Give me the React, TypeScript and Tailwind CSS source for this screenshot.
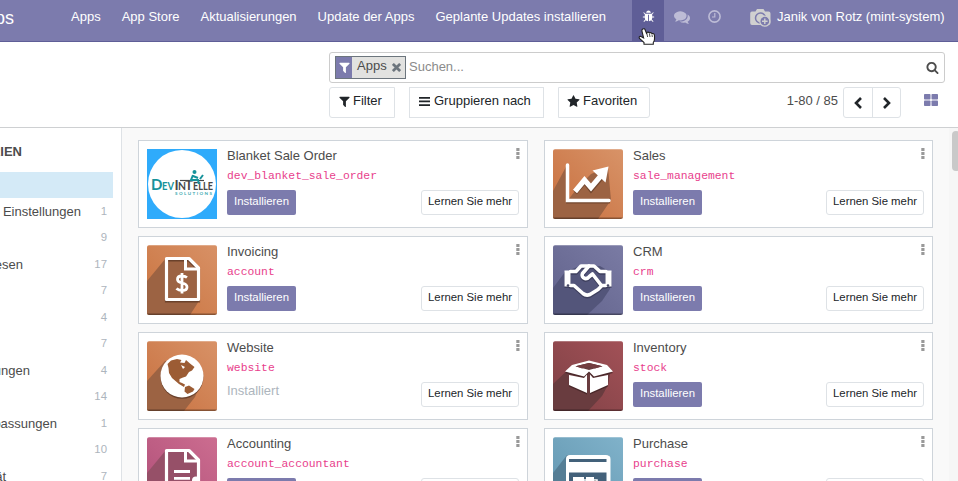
import type { ReactNode } from 'react';

const P = {
  filter: 'M1595 295q17 41-14 70l-493 493v742q0 42-39 59-13 5-25 5-27 0-45-19l-256-256q-19-19-19-45v-486l-493-493q-31-29-14-70 17-39 59-39h1280q42 0 59 39z',
  comments:
    'M1408 768q0 139-94 257t-256.5 186.5-353.5 68.5q-86 0-176-16-124 88-278 128-36 9-86 16h-3q-11 0-20.5-8t-11.5-21q-1-3-1-6.5t.5-6.5 2-6l2.5-5 3.5-5.5 4-5 4.5-5 4-4.5q5-6 23-25t26-29.5 22.5-29 25-38.5 20.5-44q-124-72-195-177t-71-224q0-139 94-257t256.5-186.5 353.5-68.5 353.5 68.5 256.5 186.5 94 257zm384 256q0 120-71 224.5t-195 176.5q10 24 20.5 44t25 38.5 22.5 29 26 29.5 23 25q1 1 4 4.5t4.5 5 4 5 3.5 5.5l2.5 5 2 6 .5 6.5-1 6.5q-3 14-13 22t-22 7q-50-7-86-16-154-40-278-128-90 16-176 16-271 0-472-132 58 4 88 4 161 0 309-45t264-129q125-92 192-212t67-254q0-77-23-152 129 71 204 178t75 230z',
  search:
    'M1216 832q0-185-131.5-316.5t-316.5-131.5-316.5 131.5-131.5 316.5 131.5 316.5 316.5 131.5 316.5-131.5 131.5-316.5zm512 832q0 52-38 90t-90 38q-54 0-90-38l-343-342q-179 124-399 124-143 0-273.5-55.5t-225-150-150-225-55.5-273.5 55.5-273.5 150-225 225-150 273.5-55.5 273.5 55.5 225 150 150 225 55.5 273.5q0 220-124 399l343 343q37 37 37 90z',
  bug: 'M1696 960q0 26-19 45t-45 19h-224q0 171-67 290l208 209q19 19 19 45t-19 45q-18 19-45 19t-45-19l-198-197q-5 5-15 13t-42 28.5-65 36.5-82 29-97 13v-896h-128v896q-51 0-101.5-13.5t-87-33-66-39-43.5-32.5l-15-14-183 207q-20 21-48 21-24 0-43-16-19-18-20.5-44.5t15.5-46.5l202-227q-58-114-58-274h-224q-26 0-45-19t-19-45 19-45 45-19h224v-294l-173-173q-19-19-19-45t19-45 45-19 45 19l173 173h844l173-173q19-19 45-19t45 19 19 45-19 45l-173 173v294h224q26 0 45 19t19 45zm-480-576h-640q0-133 93.5-226.5t226.5-93.5 226.5 93.5 93.5 226.5z',
  star: 'M1728 647q0 22-26 48l-363 354 86 500q1 7 1 20 0 21-10.500 35.500t-30.500 14.500q-19 0-40-12l-449-236-449 236q-22 12-40 12-21 0-31.500-14.500t-10.500-35.500q0-6 2-20l86-500-364-354q-25-27-25-48 0-37 56-46l502-73 225-455q19-41 49-41t49 41l225 455 502 73q56 9 56 46z',
};

function Glyph({ d, className }: { d: string; className: string }) {
  return (
    <svg viewBox="0 0 1792 1792" className={className} fill="currentColor">
      <path d={d} />
    </svg>
  );
}

function Tile({ id, from, to, shade, shadow, children }: { id: string; from: string; to: string; shade: string; shadow: string; children: ReactNode }) {
  return (
    <svg viewBox="0 0 70 70" className="size-[70px] shrink-0">
      <defs>
        <linearGradient id={id} x1="0" y1="1" x2="1" y2="0">
          <stop offset="0" stopColor={from} />
          <stop offset="1" stopColor={to} />
        </linearGradient>
        <clipPath id={id + 'c'}>
          <rect width="70" height="70" rx="2.500" />
        </clipPath>
      </defs>
      <g clipPath={`url(#${id}c)`}>
        <rect width="70" height="70" fill={`url(#${id})`} />
        <path d={shadow} fill={shade} />
        <path d="M0 .5H70" stroke="#fff" strokeOpacity=".25" />
        <path d="M0 69.300H70" stroke="#000" strokeOpacity=".35" strokeWidth="1.500" />
        {children}
      </g>
    </svg>
  );
}

const docOutline = 'M19.500 13.500H42L51.500 23V54.500H19.500Z';

const tiles: Record<string, ReactNode> = {
  blanket: (
    <svg viewBox="0 0 70 70" className="size-[70px] shrink-0" fontFamily="Lato, 'Liberation Sans', sans-serif">
      <rect width="70" height="70" fill="#2fabfb" />
      <circle cx="35" cy="35" r="34" fill="#fff" />
      <g fontWeight="700">
        <text x="4" y="41" fontSize="15" fill="#17939b">D</text>
        <text x="15" y="41" fontSize="11.500" textLength="12" lengthAdjust="spacingAndGlyphs" fill="#17939b">EV</text>
        <text x="27.500" y="41" fontSize="14" fill="#474747">I</text>
        <text x="31" y="41" fontSize="11.500" textLength="8" lengthAdjust="spacingAndGlyphs" fill="#474747">N</text>
        <text x="38" y="41" fontSize="13" fill="#474747">T</text>
        <text x="46" y="41" fontSize="11.500" textLength="20" lengthAdjust="spacingAndGlyphs" fill="#474747">ELLE</text>
        <text x="28" y="45.500" fontSize="4.500" textLength="37" fill="#39a9b0">SOLUTIONS</text>
      </g>
      <path d="M33 31.500H57" stroke="#474747" strokeWidth="1.200" />
      <circle cx="47.500" cy="23" r="2" fill="#17939b" />
      <path d="M46 26L44 31H51L52 35M46 27L51 29M53 30L56 26" fill="none" stroke="#17939b" strokeWidth="2" />
    </svg>
  ),
  sales: (
    <Tile id="sales" from="#c86f3e" to="#d89368" shade="#9c6343" shadow="M0 42L14 16L15 51L22 42L31 32L38 25L55 18L58 51L45 70H0Z">
      <g transform="translate(0 1.500)" opacity=".5" fill="none" stroke="#4a2c1c" strokeWidth="3">
        <path d="M14.500 16V51.500H57" />
        <path d="M22 42L31.500 31L38 39L50 25" strokeWidth="5" />
      </g>
      <path d="M14.500 16V51.500H56" fill="none" stroke="#fff" strokeWidth="3.500" strokeLinecap="round" />
      <path d="M22 42.500L31.500 31L38 38.500L49 25.500" fill="none" stroke="#fff" strokeWidth="5.200" />
      <path d="M39.500 21.500L55.500 17.500L52.500 33.500Z" fill="#fff" />
    </Tile>
  ),
  invoice: (
    <Tile id="inv" from="#c9733f" to="#d89166" shade="#9c6343" shadow="M0 36L19 13H42L52 23V56L43 70H0Z">
      <path d={docOutline} transform="translate(0 1.500)" fill="none" stroke="#4a2c1c" strokeOpacity=".6" strokeWidth="3.200" />
      <path d={docOutline} fill="none" stroke="#fff" strokeWidth="3.200" strokeLinejoin="round" />
      <path d="M38.500 13.500V24H51.500" fill="none" stroke="#fff" strokeWidth="3" />
      <path d="M40 32.500Q38 31 34.500 31Q30.500 31 30.500 34.300Q30.500 37 35 38Q40 39 40 42Q40 45.500 35.500 45.500Q31.500 45.500 29.500 43.500M35 28V48.500" fill="none" stroke="#fff" strokeWidth="2.800" />
    </Tile>
  ),
  crm: (
    <Tile id="crm" from="#61628b" to="#7a7ba4" shade="#53557a" shadow="M0 43L12 27L29 20L47 21L57 27V44L49 56L34 70H0Z">
      {[0, 1].map((i) => (
        <g key={i} transform={i ? undefined : 'translate(0 1.500)'} fill="none" stroke={i ? '#fff' : '#30314b'} strokeOpacity={i ? 1 : 0.6} strokeWidth="3.600" strokeLinejoin="round" strokeLinecap="round">
          <path d="M17.500 26.500H23L28 21H41L47 26.500H53M17.500 40.500H21L30 48.500Q33 51 37 49.500L45 44.500L49 40.500H53" />
          <path d="M36 21L29.500 28.500Q28 32 32 33.500Q34.500 34 37 31L39.500 29L48 40" />
          <path d="M14.500 25.500V41.500M55.500 25.500V41.500" strokeWidth="6" strokeLinecap="butt" />
        </g>
      ))}
      <circle cx="15" cy="40.500" r="1.300" fill="#474966" />
      <circle cx="55" cy="40.500" r="1.300" fill="#474966" />
    </Tile>
  ),
  website: (
    <Tile id="web" from="#c87140" to="#d89267" shade="#9c6343" shadow="M0 40L18 20L50 19L56 37L48 56L37 70H0Z">
      <circle cx="35" cy="36.300" r="21.500" fill="#4a2c1c" fillOpacity=".6" />
      <circle cx="35" cy="35" r="21.500" fill="#fff" />
      <path d="M20.500 23L24 19.500L30 18L34.500 19L33 21.500L37.500 22L39 19L43 22.500L47.500 26L45 29.500L42 31L39 35.500L36 36.500L32.500 38L32.500 41L35 42L38 43.500L37 46L32 43L25 37L22 32L21.500 27Z" fill="#9c5c34" />
      <path d="M38 46L42 44.500L47.500 48L46 50.500L40.500 53L37.500 50.500Z" fill="#9c5c34" />
      <path d="M34 24L38 26L36 28Z" fill="#fff" />
    </Tile>
  ),
  inventory: (
    <Tile id="stock" from="#7f4145" to="#a25157" shade="#693c3f" shadow="M0 43L18 26L36 20L58 28L55 44L49 55L35 70H0Z">
      {[0, 1].map((i) => (
        <g key={i} transform={i ? undefined : 'translate(0 1.500)'} fill={i ? '#fff' : '#351b1d'} fillOpacity={i ? 1 : 0.6}>
          <path d="M16 34L31 37L34 33.500V52L16 44ZM37 33.500L40 37L55 34V44L37 52Z" />
          <path fillRule="evenodd" d="M19 24L36 19.500L54 24L60 30.500L41 35.500L36 30.500L31 35.500L12 30.500ZM22.500 25.200L36 29L49.500 25.200L36 22Z" />
        </g>
      ))}
      <path d="M22.500 25.200L36 22L49.500 25.200L42 27.500L36 25.500L29 27.500Z" fill="#743d40" />
    </Tile>
  ),
  accounting: (
    <Tile id="acc" from="#b04f78" to="#cc6d90" shade="#965068" shadow="M0 36L19 13H42L52 23V70H0Z">
      <path d={docOutline} fill="none" stroke="#fff" strokeWidth="3.200" strokeLinejoin="round" />
      <path d="M38.500 13.500V24H51.500" fill="none" stroke="#fff" strokeWidth="3" />
      <path d="M27 34.500H43M27 41.300H43" stroke="#fff" strokeWidth="2.800" />
      <circle cx="49" cy="43.500" r="4" fill="#fff" />
    </Tile>
  ),
  purchase: (
    <Tile id="pur" from="#6296b0" to="#80b2ca" shade="#557e95" shadow="M0 36L14 18H56V70H0Z">
      <path d="M13 22Q13 18 17 18H53Q57.500 18 57.500 22V70H13Z" fill="#fff" />
      <path d="M16 23.500H53.500" stroke="#43617a" strokeWidth="3" />
      <path d="M16 35.500H53.500V60H16Z" fill="#43617a" />
      <path d="M20 40H31V60H20ZM33 40H41V60H33Z" fill="#fff" />
      <path d="M30 43H34M41 43H44V60" stroke="#fff" strokeWidth="1.500" />
    </Tile>
  ),
};

type App = { tile: string; name: string; tech: string; installed?: boolean };
const apps: App[] = [
  { tile: 'blanket', name: 'Blanket Sale Order', tech: 'dev_blanket_sale_order' },
  { tile: 'sales', name: 'Sales', tech: 'sale_management' },
  { tile: 'invoice', name: 'Invoicing', tech: 'account' },
  { tile: 'crm', name: 'CRM', tech: 'crm' },
  { tile: 'website', name: 'Website', tech: 'website', installed: true },
  { tile: 'inventory', name: 'Inventory', tech: 'stock' },
  { tile: 'accounting', name: 'Accounting', tech: 'account_accountant' },
  { tile: 'purchase', name: 'Purchase', tech: 'purchase' },
];

function AppCard({ app }: { app: App }) {
  return (
    <article className="flex h-[88px] gap-2.5 border border-[#ced4da] bg-white p-2">
      {tiles[app.tile]}
      <div className="flex min-w-0 grow flex-col">
        <div className="flex h-[19px] justify-between">
          <h3 className="mt-[-2px] text-[13px] leading-[18px] text-[#4c4c4c]">{app.name}</h3>
          <svg viewBox="0 0 4 11" className="mr-[-1px] mt-[-1px] h-[11px] w-1" fill="#999">
            <path d="M.3 0h3.200v3H.3zM.3 4h3.200v3H.3zM.3 8h3.200v3H.3z" />
          </svg>
        </div>
        <code className="font-['Liberation_Mono',monospace] text-[11.375px] leading-[17px] text-[#e83e8c]">{app.tech}</code>
        <div className="mt-[5px] flex items-start justify-between">
          {app.installed ? (
            <span className="mt-px text-[13px] leading-4 text-[#adb5bd]">Installiert</span>
          ) : (
            <button className="h-[25px] w-[69px] rounded-[2px] bg-[#7c7bad] pb-[2px] text-[11.375px] text-white">Installieren</button>
          )}
          <button className="h-[25px] w-[98px] rounded-[3px] border border-[#dee2e6] bg-white pb-[2px] text-[11.375px] text-[#212529]">Lernen Sie mehr</button>
        </div>
      </div>
    </article>
  );
}

const categories: [string, string][] = [
  ['Einstellungen', '1'],
  ['', '9'],
  ['esen', '17'],
  ['', '7'],
  ['', '4'],
  ['', '7'],
  ['ungen', '4'],
  ['', '14'],
  ['passungen', '1'],
  ['', '10'],
  ['ät', '7'],
];
const labelEnds = ['w-[81px]', '', 'w-[23px]', '', '', '', 'w-[30px]', '', 'w-[57px]', '', 'w-[6px]'];

const toolBtn = 'flex h-[31px] items-center border border-[#dee2e6] bg-white pb-[3px] text-[13px] text-[#212529]';

export default function App() {
  return (
    <div className="relative flex h-[481px] w-[958px] flex-col overflow-hidden bg-white font-['Liberation_Sans',Arial,sans-serif] text-[13px] text-[#4c4c4c]">
      <header className="flex h-[42px] shrink-0 border-b border-[#5f5e97] bg-[#7c7bad] text-white">
        <div className="flex w-[14px] justify-end pt-[7px] text-[18px] leading-[23px]">Apps</div>
        <nav className="ml-[57px] flex w-[561px] gap-[21px] pt-[9px] leading-4 whitespace-nowrap">
          <span>Apps</span>
          <span>App Store</span>
          <span>Aktualisierungen</span>
          <span>Update der Apps</span>
          <span>Geplante Updates installieren</span>
        </nav>
        <div className="flex h-[42px] w-8 shrink-0 justify-center bg-[#5f5e97] pt-[10px]">
          <Glyph d={P.bug} className="size-[13px]" />
        </div>
        <Glyph d={P.comments} className="ml-[10px] mt-[9px] size-4 shrink-0 text-[#bdbcd6]" />
        <svg viewBox="0 0 13 13" className="ml-[18px] mt-[10px] size-[13px] shrink-0" fill="none" stroke="#bdbcd6">
          <circle cx="6.500" cy="6.500" r="5.600" strokeWidth="1.600" />
          <path d="M6.800 3V7H4" strokeWidth="1.200" />
        </svg>
        <svg viewBox="0 0 21 18" className="ml-[29px] mt-[9px] h-[18px] w-[21px] shrink-0">
          <path d="M2 2.500H5.500L7 0H13.500L15 2.500H18.500Q20.500 2.500 20.500 4.500V14Q20.500 16 18.500 16H2Q.2 16 .2 14V4.500Q.2 2.500 2 2.500Z" fill="#d0d0d0" />
          <circle cx="10.500" cy="9" r="5" fill="none" stroke="#7c7bad" strokeWidth="1.500" />
          <circle cx="14.800" cy="12.200" r="5" fill="#7c7bad" stroke="#d0d0d0" strokeWidth="1.300" />
          <path d="M14.800 9.500V15M12 12.200H17.600" stroke="#d0d0d0" strokeWidth="1.400" />
        </svg>
        <span className="ml-[6px] pt-[9px] leading-4 whitespace-nowrap">Janik von Rotz (mint-system)</span>
      </header>

      <section className="flex h-[86px] shrink-0 flex-col border-b border-[#ced0d2] pl-[329px] pr-[13px] pt-[10px]">
        <div className="flex h-[31px] items-center rounded-[3px] border border-[#ccc] pl-[5px] pr-[5px]">
          <div className="mb-px flex h-[23px] w-[71px] items-center border border-[#6c757d] bg-[#e2e2e0]">
            <div className="flex h-full w-4 items-center justify-center bg-[#7c7bad] text-white">
              <Glyph d={P.filter} className="size-[13px]" />
            </div>
            <span className="ml-[5px] pb-[3px]">Apps</span>
            <svg viewBox="0 0 10 10" className="ml-[5px] size-[9px]" stroke="#6c757d" strokeWidth="3">
              <path d="M1 1L9 9M9 1L1 9" />
            </svg>
          </div>
          <span className="ml-[3px] grow pb-px text-[#8b8b8b]">Suchen...</span>
          <Glyph d={P.search} className="size-[13px] text-[#4c4c4c]" />
        </div>
        <div className="mt-1 flex">
          <button className={`${toolBtn} w-[66px] rounded-l-[3px] pl-[8px]`}>
            <Glyph d={P.filter} className="mr-[2px] size-[13px]" />
            Filter
          </button>
          <button className={`${toolBtn} ml-[14px] w-[135px] pl-[9px]`}>
            <svg viewBox="0 0 11 9" className="mr-[4px] h-[9px] w-[11px]" fill="currentColor">
              <path d="M0 0h11v1.700H0zM0 3.600h11v1.700H0zM0 7.200h11v1.700H0z" />
            </svg>
            Gruppieren nach
          </button>
          <button className={`${toolBtn} ml-[14px] w-[92px] rounded-r-[3px] pl-[8px]`}>
            <Glyph d={P.star} className="mr-[3px] size-[13px]" />
            Favoriten
          </button>
          <span className="ml-auto mr-[5px] pt-[6px] leading-4">1-80 / 85</span>
          <div className="flex h-[31px] w-[58px] rounded-[3px] border border-[#dee2e6] text-[#212529]">
            <div className="flex w-[29px] items-center justify-center border-r border-[#dee2e6]">
              <svg viewBox="0 0 8 12" className="h-3 w-2" fill="none" stroke="currentColor" strokeWidth="2.600">
                <path d="M7 1L2 6L7 11" />
              </svg>
            </div>
            <div className="flex grow items-center justify-center">
              <svg viewBox="0 0 8 12" className="h-3 w-2" fill="none" stroke="currentColor" strokeWidth="2.600">
                <path d="M1 1L6 6L1 11" />
              </svg>
            </div>
          </div>
          <svg viewBox="0 0 14 12" className="ml-[23px] mr-[7px] mt-[7px] h-3 w-3.5" fill="#7c7bad">
            <rect width="6.500" height="5.500" rx=".8" />
            <rect x="7.500" width="6.500" height="5.500" rx=".8" />
            <rect y="6.500" width="6.500" height="5.500" rx=".8" />
            <rect x="7.500" y="6.500" width="6.500" height="5.500" rx=".8" />
          </svg>
        </div>
      </section>

      <div className="flex min-h-0 grow">
        <aside className="w-[122px] shrink-0 overflow-hidden border-r border-[#dee2e6]">
          <div className="flex h-[44px] w-[22px] justify-end pt-[16px] font-bold leading-4">KATEGORIEN</div>
          <div className="h-[26px] w-[113px] bg-[#d4eaf7]" />
          {categories.map(([label, count], i) => (
            <div key={i} className="flex h-[26.5px] w-[107px] items-center justify-between">
              <span className={`flex justify-end whitespace-nowrap ${labelEnds[i]}`}>{label}</span>
              <span className="text-[11.375px] text-[#adb5bd]">{count}</span>
            </div>
          ))}
        </aside>
        <main className="flex grow overflow-hidden bg-[#f9f9f9] pl-4 pt-3">
          <div className="grid w-[795px] shrink-0 grid-cols-[390px_389px] content-start gap-x-4 gap-y-2">
            {apps.map((app) => (
              <AppCard key={app.name} app={app} />
            ))}
          </div>
          <div className="-mt-3 ml-[16px] flex w-[9px] shrink-0 justify-end bg-[#f6f6f6] pt-[3px]">
            <div className="mr-[-2px] h-10 w-2 rounded-full bg-[#c9c9c9]" />
          </div>
        </main>
      </div>

      <svg viewBox="0 0 18 18" className="absolute left-[638px] top-[28px] h-[18px] w-[18px]">
        <path d="M4.800 1Q6.500.2 7.200 2L8.800 6V4.500Q10.500 3.500 11.400 5Q13 4 13.900 5.600Q16.500 5 16.500 8V11Q16.500 13 15.300 14.500V16.200H6V14.500L1.500 10.500Q.5 8.500 2.500 8.300L5.600 10L3.900 3Q3.800 1.500 4.800 1Z" fill="#fff" stroke="#222" strokeWidth="1.100" />
        <path d="M9 6L9.600 9M11.500 6L12 9M14 6.500L14.300 9" stroke="#222" strokeWidth=".8" />
      </svg>
    </div>
  );
}
